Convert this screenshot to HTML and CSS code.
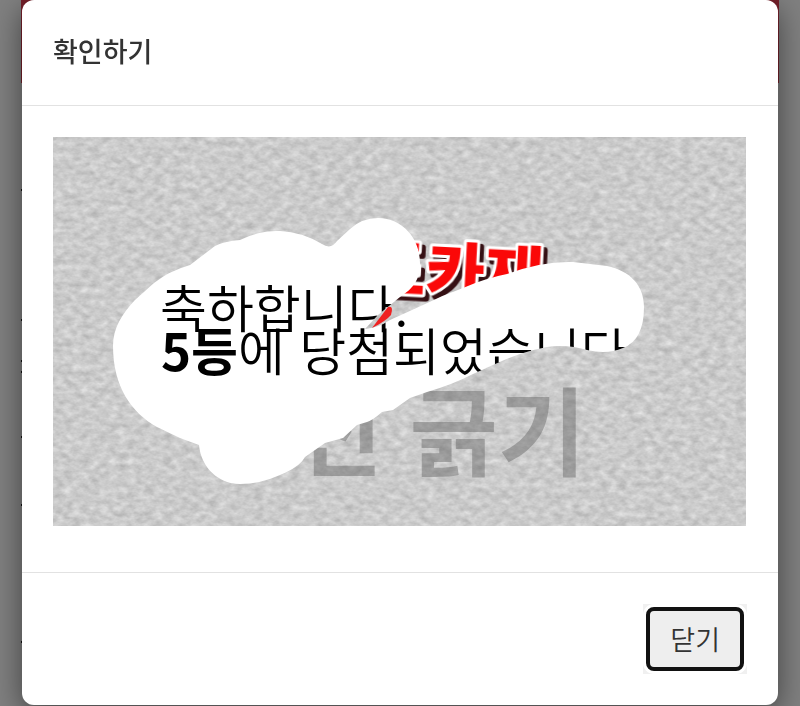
FILE: index.html
```html
<!DOCTYPE html>
<html lang="ko">
<head>
    <meta charset="UTF-8">
    <meta name="viewport" content="width=device-width, initial-scale=1.0">
    <title>확인하기</title>
    <link rel="stylesheet" href="styles.css">
</head>
<body>
<div class="page">
    <div class="page-banner"></div>
    <svg class="page-marks" width="4" height="500" viewBox="0 0 4 500" aria-hidden="true">
        <path d="M0 107h4M0 237h4M0 278h4M0 289h4M0 354h4M0 422h4M0 559h4"/>
    </svg>
</div>

<div class="overlay">
    <div class="modal" role="dialog" aria-modal="true" aria-labelledby="modal-title">
        <div class="modal-header">
            <h2 id="modal-title">확인하기</h2>
        </div>
        <div class="modal-body">
            <svg class="scratch" viewBox="53 137 693 389">
                <defs>
                    <filter id="grain" x="0" y="0" width="100%" height="100%" color-interpolation-filters="sRGB">
                        <feTurbulence type="fractalNoise" baseFrequency="0.11 0.17" numOctaves="3" seed="21"/>
                        <feColorMatrix values="0.22 0.06 0 0 0.655
                                               0.22 0.06 0 0 0.655
                                               0.22 0.06 0 0 0.655
                                               0 0 0 0 1"/>
                    </filter>
                    <path id="scratched" d="M113 346C113 328 122 314 135 300L154 283Q169 271 190 265L215 246Q225 241 240 240Q260 230 280 231Q302 232 322 244Q331 250 337 241L350 229Q362 218 378 218C402 218 420 238 420 263C420 279 414 288 400 297L378 315L365 329Q378 328 390 320L423 305Q443 295 463 288Q486 278 507 274Q542 261 573 262L607 266C630 271 644 285 644 307Q644 340 623 348Q607 355 587 350Q567 344 547 347Q520 352 493 365L473 374Q454 384 427 392L410 398L393 410L382 412Q373 420 367 422L357 425L343 438L325 443L305 457Q300 467 280 475Q260 484 240 484C218 484 201 467 199 445L180 438L157 427C132 413 113 387 113 346Z"/>
                    <clipPath id="reveal"><use href="#scratched"/></clipPath>
                </defs>

                <!-- coating -->
                <rect x="53" y="137" width="693" height="389" filter="url(#grain)"/>
                <text class="logo" x="366" y="294" transform="rotate(3 425 290)">도카재</text>
                <text class="hint" x="206" y="468">동전 긁기</text>

                <!-- scratched area with the result -->
                <use class="paper" href="#scratched"/>
                <g class="result" clip-path="url(#reveal)">
                    <text x="160" y="328">축하합니다.</text>
                    <text x="161" y="371"><tspan class="rank">5등</tspan>에 당첨되었습니다.</text>
                </g>
                <path class="logo-tail" d="M372 328L388 307Q394 305 391 315Q386 321 372 328Z"/>
            </svg>
        </div>
        <div class="modal-footer">
            <div class="close-box">
                <button type="button" class="close">닫기</button>
            </div>
        </div>
    </div>
</div>
</body>
</html>
```

FILE: styles.css
```css
* {
    box-sizing: border-box;
}

body {
    margin: 0;
    min-height: 100vh;
    background-color: #808080;
    color: #333;
    font-family: "Noto Sans CJK KR", "Noto Sans", sans-serif;
    overflow: hidden;
}

.page {
    padding: 0 21px;
}

.page-banner {
    height: 83px;
    background-color: #76202a;
}

.page-marks {
    display: block;
    overflow: visible;
    stroke: #111;
    stroke-width: 2;
}

.overlay {
    position: fixed;
    inset: 0;
    padding: 0 22px;
}

.modal {
    background-color: white;
    border-radius: 12px;
    box-shadow: 0 8px 30px rgba(0, 0, 0, 0.5);
}

.modal-header {
    padding: 31px 31px 34px;
    border-bottom: 1px solid #e2e2e2;
}

.modal-header h2 {
    margin: 0;
    font-size: 27px;
    line-height: 40px;
    font-weight: 500;
}

.modal-body {
    padding: 31px 32px 46px 31px;
    border-bottom: 1px solid #e2e2e2;
}

.modal-footer {
    display: flex;
    justify-content: flex-end;
    padding: 31px;
}

.close-box {
    padding: 3px;
    background-color: #f0f0f0;
}

.close {
    display: block;
    padding: 8px 20px;
    border: 4px solid #111;
    border-radius: 8px;
    box-shadow: 0 0 0 3px white;
    background-color: #eee;
    color: #333;
    font-family: inherit;
    font-size: 27px;
    line-height: 40px;
    font-weight: 350;
    cursor: pointer;
}

.scratch {
    display: block;
    width: 100%;
}

.paper {
    fill: white;
}

.hint {
    font-size: 96px;
    font-weight: 700;
    fill: #555;
    fill-opacity: 0.4;
}

.result {
    font-size: 51px;
    font-weight: 350;
    fill: black;
}

.rank {
    font-weight: 700;
}

.logo {
    font-size: 64px;
    font-weight: 900;
    fill: #fa0808;
    stroke: white;
    stroke-width: 6;
    stroke-linejoin: round;
    paint-order: stroke;
    filter: drop-shadow(4px 4px 0 #351014);
}

.logo-tail {
    fill: #ef2020;
}
```
